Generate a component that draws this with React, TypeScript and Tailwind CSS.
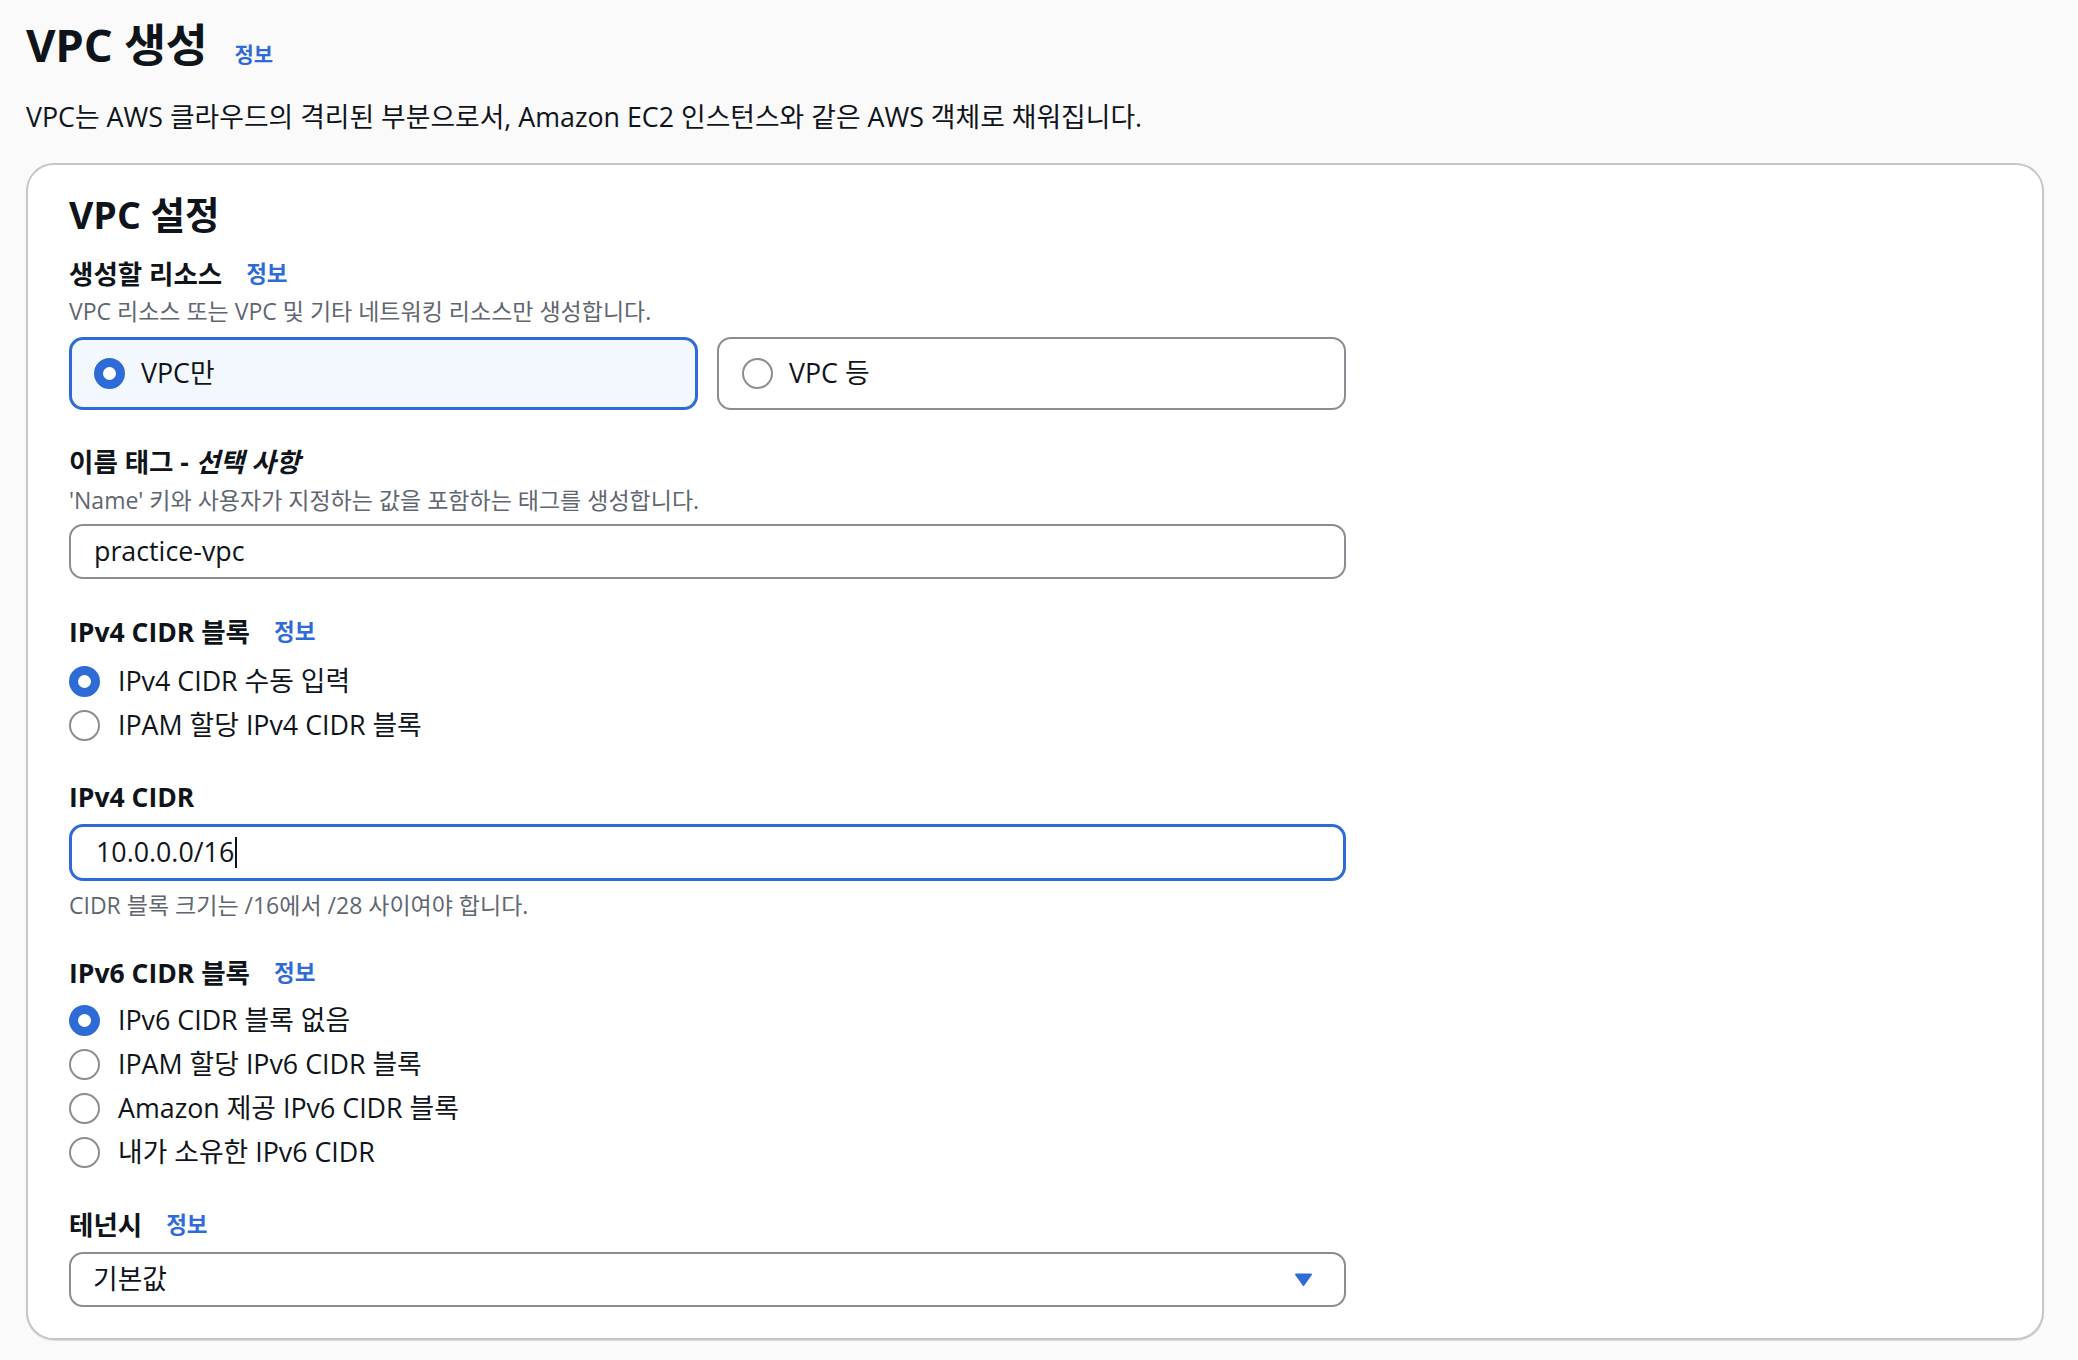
import React from "react";

const BLUE = "#2f6bd6";

function InfoLink({ size = "text-[22.5px]" }: { size?: string }) {
  return (
    <a href="#" className={`${size} font-bold text-[#2f6bd6] leading-none no-underline`}>
      정보
    </a>
  );
}

function Radio({ checked }: { checked: boolean }) {
  return checked ? (
    <span className="inline-block w-[31px] h-[31px] shrink-0 rounded-full border-[9px] border-[#2f6bd6] bg-white" />
  ) : (
    <span className="inline-block w-[31px] h-[31px] shrink-0 rounded-full border-2 border-[#8c8c94] bg-white" />
  );
}

function Label({ children }: { children: React.ReactNode }) {
  return (
    <div className="flex items-center gap-[24px] h-[36px] text-[26.5px] font-bold text-[#0f141a] leading-[36px]">
      {children}
    </div>
  );
}

function Hint({ children, className = "" }: { children: React.ReactNode; className?: string }) {
  return <div className={`h-[30px] text-[23px] leading-[30px] text-[#5f6670] ${className}`}>{children}</div>;
}

function RadioRow({ checked, label }: { checked: boolean; label: string }) {
  return (
    <div className="flex items-center gap-[18px] h-[44px]">
      <Radio checked={checked} />
      <span className="text-[26.8px] leading-none text-[#0f141a]">{label}</span>
    </div>
  );
}

export default function App() {
  return (
    <div className="min-h-screen bg-[#fafafa] pl-[26px] pr-[34px] pt-[16px] pb-[19px] [font-family:'Open_Sans','Noto_Sans_CJK_KR',sans-serif] text-[#0f141a]">
      {/* page header */}
      <div className="flex items-baseline gap-[27px] h-[56px]">
        <h1 className="text-[45.5px] font-bold leading-[56px] tracking-[-0.2px]">VPC 생성</h1>
        <InfoLink size="text-[21px]" />
      </div>
      <p className="mt-[27px] text-[26.8px] leading-[36px]">
        VPC는 AWS 클라우드의 격리된 부분으로서, Amazon EC2 인스턴스와 같은 AWS 객체로 채워집니다.
      </p>

      {/* settings container */}
      <section className="mt-[28px] rounded-[28px] border-2 border-[#c6c6cd] bg-white pl-[41px] pr-[40px] pt-[26px] pb-[31px] shadow-[0_1px_1px_rgba(0,7,22,0.12)]">
        <h2 className="text-[37.5px] font-bold leading-[48px]">VPC 설정</h2>

        <div className="w-[1277px]">
          {/* resources to create */}
          <div className="mt-[17px]">
            <Label>
              <span>생성할 리소스</span>
              <InfoLink />
            </Label>
            <Hint className="mt-[4px]">VPC 리소스 또는 VPC 및 기타 네트워킹 리소스만 생성합니다.</Hint>
            <div className="mt-[11px] grid grid-cols-2 gap-[19px]">
              <div className="flex items-center gap-[16px] h-[73px] rounded-[14px] border-[3px] border-[#2f6bd6] bg-[#f2f8fd] pl-[22px]">
                <Radio checked />
                <span className="text-[26.8px] leading-none">VPC만</span>
              </div>
              <div className="flex items-center gap-[16px] h-[73px] rounded-[14px] border-2 border-[#8c8c94] bg-white pl-[23px]">
                <Radio checked={false} />
                <span className="text-[26.8px] leading-none">VPC 등</span>
              </div>
            </div>
          </div>

          {/* name tag */}
          <div className="mt-[34px]">
            <Label>
              <span>
                이름 태그 - <i>선택 사항</i>
              </span>
            </Label>
            <Hint className="mt-[5px]">'Name' 키와 사용자가 지정하는 값을 포함하는 태그를 생성합니다.</Hint>
            <div className="mt-[9px] flex items-center h-[55px] rounded-[14px] border-2 border-[#8c8c94] bg-white pl-[23px] text-[26.8px]">
              practice-vpc
            </div>
          </div>

          {/* IPv4 CIDR block */}
          <div className="mt-[35px]">
            <Label>
              <span>IPv4 CIDR 블록</span>
              <InfoLink />
            </Label>
            <div className="mt-[9px] flex flex-col">
              <RadioRow checked label="IPv4 CIDR 수동 입력" />
              <RadioRow checked={false} label="IPAM 할당 IPv4 CIDR 블록" />
            </div>
          </div>

          {/* IPv4 CIDR */}
          <div className="mt-[32px]">
            <Label>
              <span>IPv4 CIDR</span>
            </Label>
            <div className="mt-[9px] flex items-center h-[57px] rounded-[14px] border-[3px] border-[#2f6bd6] bg-white pl-[24px] text-[26.8px]">
              <span>10.0.0.0/16</span>
              <span className="ml-px inline-block w-[1.5px] h-[31px] bg-[#0f141a]" />
            </div>
            <Hint className="mt-[9px]">CIDR 블록 크기는 /16에서 /28 사이여야 합니다.</Hint>
          </div>

          {/* IPv6 CIDR block */}
          <div className="mt-[35px]">
            <Label>
              <span>IPv6 CIDR 블록</span>
              <InfoLink />
            </Label>
            <div className="mt-[7px] flex flex-col">
              <RadioRow checked label="IPv6 CIDR 블록 없음" />
              <RadioRow checked={false} label="IPAM 할당 IPv6 CIDR 블록" />
              <RadioRow checked={false} label="Amazon 제공 IPv6 CIDR 블록" />
              <RadioRow checked={false} label="내가 소유한 IPv6 CIDR" />
            </div>
          </div>

          {/* tenancy */}
          <div className="mt-[33px]">
            <Label>
              <span>테넌시</span>
              <InfoLink />
            </Label>
            <div className="mt-[9px] flex items-center justify-between h-[55px] rounded-[14px] border-2 border-[#8c8c94] bg-white pl-[22px] pr-[31px] text-[26.8px]">
              <span>기본값</span>
              <svg width="19" height="15" viewBox="0 0 19 15" aria-hidden="true">
                <path d="M2 1.5 H17 a1 1 0 0 1 0.8 1.6 L10.3 13.4 a1 1 0 0 1 -1.6 0 L1.2 3.1 A1 1 0 0 1 2 1.5 Z" fill={BLUE} />
              </svg>
            </div>
          </div>
        </div>
      </section>
    </div>
  );
}
